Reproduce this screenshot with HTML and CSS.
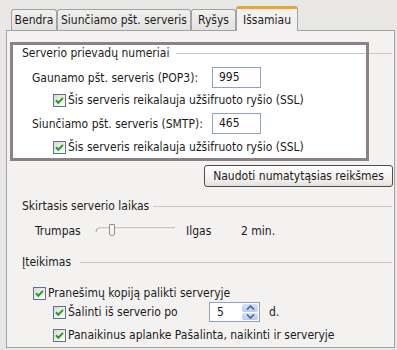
FILE: index.html
```html
<!DOCTYPE html>
<html lang="lt">
<head>
  <meta charset="UTF-8" />
  <title>Išsamiau</title>
  <link rel="stylesheet" href="styles.css">
</head>
<body>

  <svg class="defs" width="0" height="0">
    <defs>
      <linearGradient id="cb-fill" x1="0" y1="0" x2="1" y2="1">
        <stop offset="0" stop-color="#d9d9d3"/>
        <stop offset="1" stop-color="#ffffff"/>
      </linearGradient>
      <symbol id="cb" viewBox="0 0 13 13">
        <rect x="0.5" y="0.5" width="12" height="12" fill="url(#cb-fill)" stroke="#5f7390"/>
        <path d="M3 6.3 L5.3 8.7 L10 3.9" stroke="#21a121" stroke-width="2" fill="none"/>
      </symbol>
    </defs>
  </svg>

  <div class="tabs">
    <div class="tab w-general">Bendra</div>
    <div class="tab w-outgoing">Siunčiamo pšt. serveris</div>
    <div class="tab w-connection">Ryšys</div>
    <div class="tab tab-active w-advanced">Išsamiau</div>
  </div>

  <div class="panel">

    <div class="ports">
      <div class="legend legend-wide"><span>Serverio prievadų numeriai</span></div>
      <div class="port-row">
        <label>Gaunamo pšt. serveris (POP3):</label>
        <div class="field">995</div>
      </div>
      <div class="check-row">
        <svg class="cb"><use href="#cb"/></svg>
        <span>Šis serveris reikalauja užšifruoto ryšio (SSL)</span>
      </div>
      <div class="port-row">
        <label>Siunčiamo pšt. serveris (SMTP):</label>
        <div class="field">465</div>
      </div>
      <div class="check-row">
        <svg class="cb"><use href="#cb"/></svg>
        <span>Šis serveris reikalauja užšifruoto ryšio (SSL)</span>
      </div>
    </div>

    <div class="btn-row">
      <button>Naudoti numatytąsias reikšmes</button>
    </div>

    <div class="legend legend-timeout"><span>Skirtasis serverio laikas</span></div>
    <div class="slider-row">
      <span class="slider-min">Trumpas</span>
      <svg class="slider" width="80" height="16" viewBox="0 0 80 16">
        <path d="M1 9 Q1 5 4 5 L80 5" stroke="#a7a5a3" fill="none"/>
        <path d="M4 6 L80 6" stroke="#ffffff"/>
        <path d="M14.5 1.5 L19.5 1.5 L19.5 11 Q17 14.5 14.5 11 Z" fill="#f5f4f2" stroke="#8f8c8a"/>
      </svg>
      <span class="slider-max">Ilgas</span>
      <span>2 min.</span>
    </div>

    <div class="legend legend-delivery"><span>Įteikimas</span></div>
    <div class="check-row row-leave">
      <svg class="cb"><use href="#cb"/></svg>
      <span>Pranešimų kopiją palikti serveryje</span>
    </div>
    <div class="check-row row-remove">
      <svg class="cb"><use href="#cb"/></svg>
      <span class="remove-label">Šalinti iš serverio po</span>
      <div class="spin">
        <span class="spin-value">5</span>
        <div class="spin-btns">
          <div class="spin-btn">
            <svg width="9" height="5" viewBox="0 0 9 5"><path d="M1 4.5 L4.5 1 L8 4.5" stroke="#4d6185" stroke-width="1.6" fill="none"/></svg>
          </div>
          <div class="spin-btn">
            <svg width="9" height="5" viewBox="0 0 9 5"><path d="M1 0.5 L4.5 4 L8 0.5" stroke="#4d6185" stroke-width="1.6" fill="none"/></svg>
          </div>
        </div>
      </div>
      <span class="unit">d.</span>
    </div>
    <div class="check-row row-purge">
      <svg class="cb"><use href="#cb"/></svg>
      <span>Panaikinus aplanke Pašalinta, naikinti ir serveryje</span>
    </div>

  </div>

</body>
</html>
```

FILE: styles.css
```css
body {
  margin: 0;
  background: #e9e7e6;
  color: #1b1b1b;
  font-family: "DejaVu Sans Condensed", "DejaVu Sans", sans-serif;
  font-size: 12px;
}
.defs {
  position: absolute;
}

/* tabs */
.tabs {
  display: flex;
  align-items: flex-end;
  height: 30px;
  padding-left: 11px;
}
.tab {
  height: 21px;
  line-height: 21px;
  text-align: center;
  background: linear-gradient(#f1f0ee, #e4e2e0);
  border: 1px solid #9ea3a5;
  border-bottom: none;
  border-radius: 3px 3px 0 0;
  box-sizing: border-box;
}
.tab + .tab {
  margin-left: 0;
}
.w-general { width: 46px; }
.w-outgoing { width: 134px; }
.w-connection { width: 45px; }
.w-advanced { width: 62px; }
.tab-active {
  height: 25px;
  line-height: 23px;
  background: #f4f2f1;
  border-top: 3px solid #f2b640;
  border-top-color: #e8a33a;
  margin-bottom: -1px;
  position: relative;
  z-index: 1;
}

/* page */
.panel {
  margin: 0 2px 0 6px;
  height: 316px;
  background: #f4f2f1;
  border: 1px solid #9ea3a5;
}
.legend {
  display: flex;
  align-items: center;
  height: 16px;
  padding-left: 15px;
  gap: 7px;
}
.legend::after {
  content: "";
  flex: 1;
  height: 1px;
  background: #c9c3c4;
  margin-right: 2px;
}

/* highlighted port box */
.ports {
  margin: 14px 0 0 6px;
  width: 353px;
  height: 113px;
  background: #fff;
  outline: 3px solid #8c8089;
}
.ports .legend {
  padding-left: 9px;
}
.ports .legend::after {
  margin-right: -26px;
}
.port-row {
  display: flex;
  align-items: center;
  margin-top: 6px;
  padding-left: 19px;
  height: 21px;
}
.port-row label {
  width: 180px;
}
.field {
  width: 49px;
  height: 21px;
  line-height: 19px;
  padding-left: 6px;
  box-sizing: border-box;
  border: 1px solid #8ea3bb;
  background: #fff;
}
.check-row {
  display: flex;
  align-items: center;
  gap: 2px;
  height: 14px;
  margin-top: 5px;
  padding-left: 40px;
}
.port-row + .check-row + .port-row {
  margin-top: 6px;
}
.port-row + .check-row + .port-row + .check-row {
  margin-top: 6px;
}
.cb {
  width: 13px;
  height: 13px;
  flex: none;
}

/* button */
.btn-row {
  display: flex;
  justify-content: flex-end;
  margin-top: 7px;
  padding-right: 1px;
}
button {
  width: 189px;
  height: 22px;
  padding: 0;
  font: inherit;
  color: inherit;
  background: linear-gradient(#ffffff, #f1efec 70%, #e3e0dc);
  border: 1px solid #4f4d4e;
  border-radius: 3px;
}

/* timeout */
.legend-timeout {
  margin-top: 11px;
  gap: 4px;
}
.slider-row {
  display: flex;
  align-items: center;
  height: 16px;
  margin-top: 9px;
  padding-left: 28px;
}
.slider-min {
  width: 60px;
}
.slider {
  flex: none;
}
.slider-max {
  width: 55px;
  margin-left: 11px;
}

/* delivery */
.legend-delivery {
  margin-top: 15px;
  gap: 9px;
}
.row-leave {
  height: 16px;
  margin-top: 15px;
  padding-left: 26px;
}
.row-remove {
  height: 20px;
  margin-top: 1px;
  padding-left: 46px;
}
.row-purge {
  height: 16px;
  margin-top: 5px;
  padding-left: 46px;
}
.remove-label {
  width: 139px;
}
.spin {
  display: flex;
  width: 51px;
  height: 20px;
  box-sizing: border-box;
  border: 1px solid #8ea3bb;
  background: #fff;
}
.spin-value {
  flex: 1;
  line-height: 18px;
  padding-left: 7px;
}
.spin-btns {
  display: flex;
  flex-direction: column;
  width: 16px;
  padding: 1px;
  gap: 1px;
}
.spin-btn {
  flex: 1;
  display: flex;
  align-items: center;
  justify-content: center;
  background: linear-gradient(#d6e1fb, #b9cbf5);
  border-radius: 2px;
}
.unit {
  margin-left: 7px;
}
```
